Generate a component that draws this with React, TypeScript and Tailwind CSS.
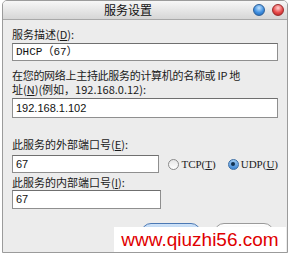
import React from 'react'

const cjk = { fontFamily: '"Noto Sans CJK SC", "Noto Sans", sans-serif' }

function Field({ value, width, height, mono }: { value: string; width: string; height: string; mono?: boolean }) {
    return (
        <div
            className={`${width} ${height} bg-white border border-[#8f8f8f] border-t-[#6f6f6f] flex items-center pl-[3px] text-[11px] text-[#111]`}
            style={mono ? { fontFamily: '"Liberation Mono", "Noto Sans CJK SC", monospace' } : { fontFamily: '"Liberation Sans", Arial, sans-serif' }}
        >
            {value}
        </div>
    )
}

function Radio({ checked, label, mnemonic }: { checked?: boolean; label: string; mnemonic: string }) {
    return (
        <div className="flex items-center gap-[2px]">
            {checked ? (
                <span className="w-[11px] h-[11px] rounded-full border border-[#3b6ea5] bg-gradient-to-b from-[#9cc8f0] to-[#3d86d4] flex items-center justify-center">
                    <span className="w-[4px] h-[4px] rounded-full bg-[#10304f]" />
                </span>
            ) : (
                <span className="w-[11px] h-[11px] rounded-full border border-[#8a8a8a] bg-gradient-to-b from-[#e6e6e6] to-white" />
            )}
            <span className="text-[11px] text-[#222]" style={{ fontFamily: '"Liberation Serif", serif' }}>
                {label}(<span className="underline">{mnemonic}</span>)
            </span>
        </div>
    )
}

export default function App() {
    return (
        <div className="w-[290px] h-[255px] bg-white relative overflow-hidden" style={cjk}>
            <div className="ml-[2px] w-[286px] h-[253px] border border-[#9b9b9b] rounded-t-[5px] bg-[#ececec] flex flex-col overflow-hidden">
                {/* Title bar */}
                <div className="h-[19px] shrink-0 bg-gradient-to-b from-[#f7f7f7] to-[#d6d6d6] border-b border-[#a8a8a8] flex items-center">
                    <div className="flex-1 text-center text-[12px] text-[#111]">服务设置</div>
                    <div className="flex items-center gap-[7px] pr-[3px]">
                        <span className="w-[12px] h-[12px] rounded-full bg-[radial-gradient(circle_at_50%_30%,#bfe2ff_0%,#3f8fe0_55%,#1d5fae_100%)] border border-[#2d5f98]" />
                        <span className="w-[12px] h-[12px] rounded-full bg-[radial-gradient(circle_at_50%_30%,#ffd0d0_0%,#e84a4a_55%,#a81e1e_100%)] border border-[#9a2a2a]" />
                    </div>
                </div>

                {/* Body */}
                <div className="flex flex-col px-[9px] text-[11px] text-[#1a1a1a]">
                    <div className="mt-[7px] leading-[14px]">服务描述(<span className="underline">D</span>):</div>
                    <div className="mt-[2px]">
                        <Field value="DHCP（67）" width="w-[266px]" height="h-[18px]" mono />
                    </div>

                    <div className="mt-[7px] leading-[14px] tracking-[-0.3px]">在您的网络上主持此服务的计算机的名称或 IP 地</div>
                    <div className="leading-[14px]">址(<span className="underline">N</span>)(例如，192.168.0.12):</div>
                    <div className="mt-[2px]">
                        <Field value="192.168.1.102" width="w-[266px]" height="h-[20px]" />
                    </div>

                    <div className="mt-[19px] leading-[14px]">此服务的外部端口号(<span className="underline">E</span>):</div>
                    <div className="mt-[4px] flex items-center">
                        <Field value="67" width="w-[149px]" height="h-[18px]" />
                        <div className="ml-[9px] flex items-center gap-[12px]">
                            <Radio label="TCP" mnemonic="T" />
                            <Radio checked label="UDP" mnemonic="U" />
                        </div>
                    </div>

                    <div className="mt-[2px] leading-[14px]">此服务的内部端口号(<span className="underline">I</span>):</div>
                    <div className="mt-[1px]">
                        <Field value="67" width="w-[149px]" height="h-[19px]" />
                    </div>

                    <div className="mt-[14px] flex justify-end gap-[13px] pr-[4px]">
                        <div className="w-[60px] h-[20px] rounded-full border border-[#4a78b4] bg-gradient-to-b from-[#cfe3f8] to-[#8db7e6]" />
                        <div className="w-[60px] h-[20px] rounded-full border border-[#9a9a9a] bg-gradient-to-b from-white to-[#dcdcdc]" />
                    </div>
                </div>
            </div>

            {/* Watermark */}
            <div className="absolute left-[114px] top-[227px] w-[172px] h-[25px] bg-white flex items-center justify-center">
                <span className="text-[19px] text-[#e00000] leading-none" style={{ fontFamily: '"Liberation Sans", Arial, sans-serif' }}>
                    www.qiuzhi56.com
                </span>
            </div>
        </div>
    )
}
